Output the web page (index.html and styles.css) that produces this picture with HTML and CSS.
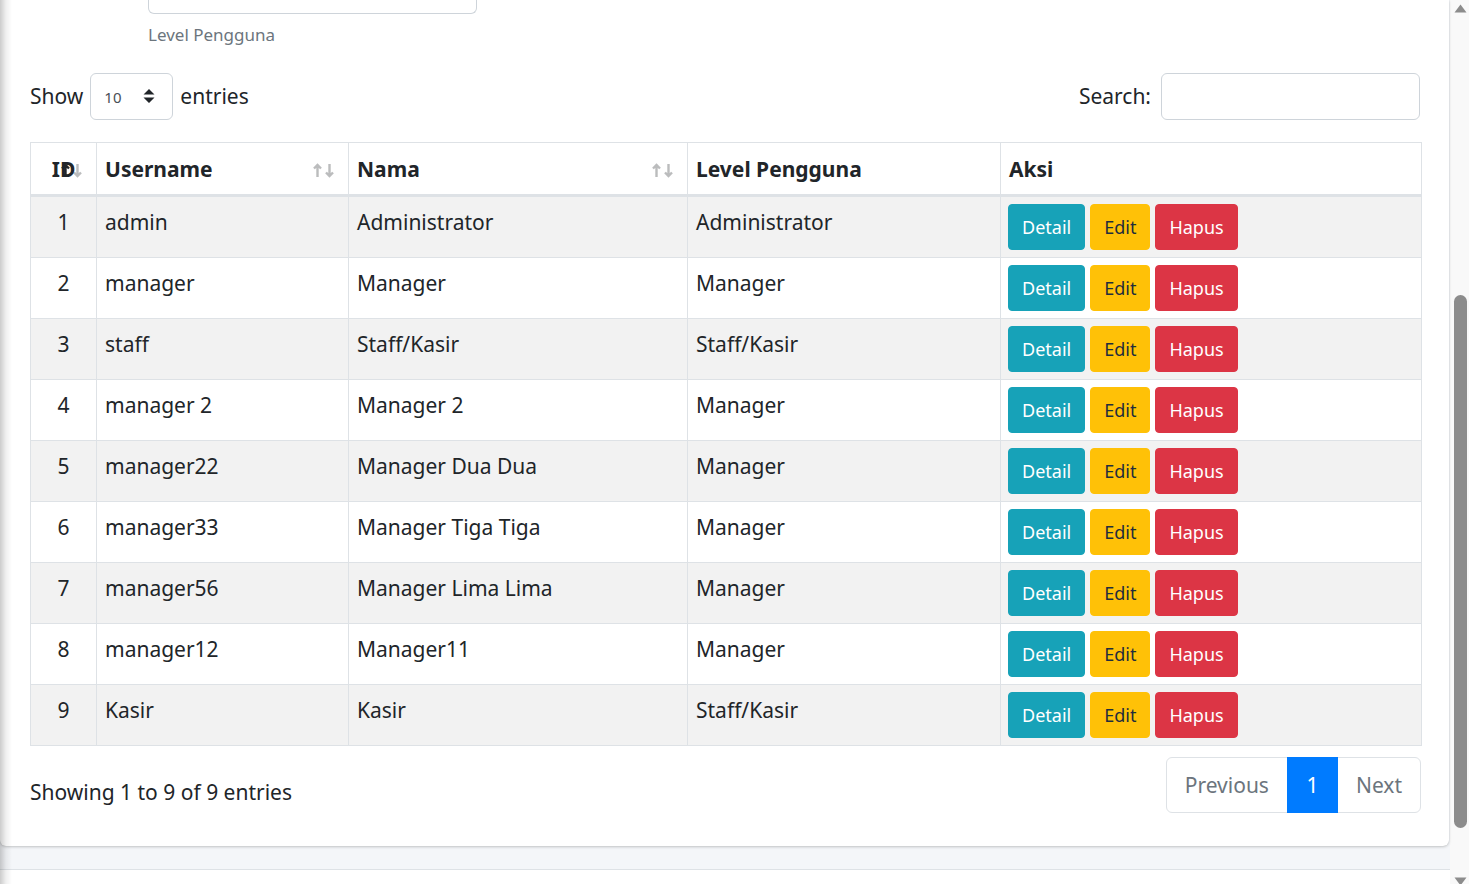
FILE: index.html
```html
<!DOCTYPE html>
<html lang="id">
<head>
<meta charset="utf-8">
<title>Data User</title>
<link rel="stylesheet" href="styles.css">
</head>
<body>
<div class="layout">
  <main class="content">
    <div class="sidebar-shadow"></div>
    <section class="card">
      <div class="filter">
        <div class="filter-input"></div>
        <small class="filter-help">Level Pengguna</small>
      </div>

      <div class="dt-top">
        <label class="dt-length">Show
          <span class="select">10
            <svg class="select-arrow" width="12" height="16" viewBox="0 0 12 16"><path d="M6 1 L11.5 6.5 H0.5 Z M6 15 L11.5 9.5 H0.5 Z" fill="#212529"/></svg>
          </span>
          entries</label>
        <label class="dt-search">Search: <span class="search-input"></span></label>
      </div>

      <table class="table">
        <colgroup>
          <col class="c-id"><col class="c-user"><col class="c-nama"><col class="c-level"><col>
        </colgroup>
        <thead>
          <tr>
            <th class="center sort">ID
              <span class="sort-icons"><svg class="arr on" width="9" height="15" viewBox="0 0 9 15"><path d="M4.5 14V2M1 5.5L4.5 2 8 5.5" fill="none" stroke="currentColor" stroke-width="2.4"/></svg><svg class="arr" width="9" height="15" viewBox="0 0 9 15"><path d="M4.5 1V13M1 9.5L4.5 13 8 9.5" fill="none" stroke="currentColor" stroke-width="2.4"/></svg></span>
            </th>
            <th class="sort">Username
              <span class="sort-icons"><svg class="arr" width="9" height="15" viewBox="0 0 9 15"><path d="M4.5 14V2M1 5.5L4.5 2 8 5.5" fill="none" stroke="currentColor" stroke-width="2.4"/></svg><svg class="arr" width="9" height="15" viewBox="0 0 9 15"><path d="M4.5 1V13M1 9.5L4.5 13 8 9.5" fill="none" stroke="currentColor" stroke-width="2.4"/></svg></span>
            </th>
            <th class="sort">Nama
              <span class="sort-icons"><svg class="arr" width="9" height="15" viewBox="0 0 9 15"><path d="M4.5 14V2M1 5.5L4.5 2 8 5.5" fill="none" stroke="currentColor" stroke-width="2.4"/></svg><svg class="arr" width="9" height="15" viewBox="0 0 9 15"><path d="M4.5 1V13M1 9.5L4.5 13 8 9.5" fill="none" stroke="currentColor" stroke-width="2.4"/></svg></span>
            </th>
            <th>Level Pengguna</th>
            <th>Aksi</th>
          </tr>
        </thead>
        <tbody>
          <tr><td class="center">1</td><td>admin</td><td>Administrator</td><td>Administrator</td><td><div class="actions"><a class="btn info">Detail</a><a class="btn warning">Edit</a><a class="btn danger">Hapus</a></div></td></tr>
          <tr><td class="center">2</td><td>manager</td><td>Manager</td><td>Manager</td><td><div class="actions"><a class="btn info">Detail</a><a class="btn warning">Edit</a><a class="btn danger">Hapus</a></div></td></tr>
          <tr><td class="center">3</td><td>staff</td><td>Staff/Kasir</td><td>Staff/Kasir</td><td><div class="actions"><a class="btn info">Detail</a><a class="btn warning">Edit</a><a class="btn danger">Hapus</a></div></td></tr>
          <tr><td class="center">4</td><td>manager 2</td><td>Manager 2</td><td>Manager</td><td><div class="actions"><a class="btn info">Detail</a><a class="btn warning">Edit</a><a class="btn danger">Hapus</a></div></td></tr>
          <tr><td class="center">5</td><td>manager22</td><td>Manager Dua Dua</td><td>Manager</td><td><div class="actions"><a class="btn info">Detail</a><a class="btn warning">Edit</a><a class="btn danger">Hapus</a></div></td></tr>
          <tr><td class="center">6</td><td>manager33</td><td>Manager Tiga Tiga</td><td>Manager</td><td><div class="actions"><a class="btn info">Detail</a><a class="btn warning">Edit</a><a class="btn danger">Hapus</a></div></td></tr>
          <tr><td class="center">7</td><td>manager56</td><td>Manager Lima Lima</td><td>Manager</td><td><div class="actions"><a class="btn info">Detail</a><a class="btn warning">Edit</a><a class="btn danger">Hapus</a></div></td></tr>
          <tr><td class="center">8</td><td>manager12</td><td>Manager11</td><td>Manager</td><td><div class="actions"><a class="btn info">Detail</a><a class="btn warning">Edit</a><a class="btn danger">Hapus</a></div></td></tr>
          <tr><td class="center">9</td><td>Kasir</td><td>Kasir</td><td>Staff/Kasir</td><td><div class="actions"><a class="btn info">Detail</a><a class="btn warning">Edit</a><a class="btn danger">Hapus</a></div></td></tr>
        </tbody>
      </table>

      <div class="dt-bottom">
        <div class="dt-info">Showing 1 to 9 of 9 entries</div>
        <ul class="pagination">
          <li class="pg-item disabled">Previous</li>
          <li class="pg-item active">1</li>
          <li class="pg-item disabled">Next</li>
        </ul>
      </div>
    </section>
    <footer class="footer"></footer>
  </main>
  <div class="scrollbar">
    <svg class="sb-arrow" width="13" height="9" viewBox="0 0 13 9"><path d="M6.5 0.5 L12.5 8.5 H0.5 Z" fill="#8c8c8c"/></svg>
    <div class="sb-thumb"></div>
    <svg class="sb-arrow sb-down" width="13" height="9" viewBox="0 0 13 9"><path d="M6.5 8.5 L12.5 0.5 H0.5 Z" fill="#8c8c8c"/></svg>
  </div>
</div>
</body>
</html>
```

FILE: styles.css
```css
html, body {
  margin: 0;
  padding: 0;
  height: 884px;
  overflow: hidden;
}

body {
  font-family: "Noto Sans", "Open Sans", sans-serif;
  font-size: 21px;
  color: #212529;
  background: #fff;
}

.layout {
  display: flex;
  height: 884px;
}

.content {
  flex: 1;
  min-width: 0;
  position: relative;
  background: #f4f6f9;
  display: flex;
  flex-direction: column;
}

.sidebar-shadow {
  position: absolute;
  left: 0;
  top: 0;
  bottom: 0;
  width: 12px;
  background: linear-gradient(to right, rgba(0, 0, 0, 0.2), rgba(0, 0, 0, 0.06) 50%, rgba(0, 0, 0, 0));
  pointer-events: none;
  z-index: 2;
}

.card {
  background: #fff;
  width: 1449px;
  box-sizing: border-box;
  padding: 0 29px 33px 30px;
  border-radius: 0 0 6px 6px;
  box-shadow: 0 0 1px rgba(0, 0, 0, 0.125), 0 1px 3px rgba(0, 0, 0, 0.2);
}

/* filter */
.filter {
  padding-left: 118px;
}

.filter-input {
  width: 327px;
  height: 13px;
  border: 1px solid #ced4da;
  border-top: 0;
  border-radius: 0 0 6px 6px;
}

.filter-help {
  display: block;
  margin-top: 7px;
  font-size: 17px;
  line-height: 27px;
  color: #6c757d;
}

/* datatable top */
.dt-top {
  display: flex;
  justify-content: space-between;
  align-items: center;
  margin-top: 25px;
  height: 46px;
}

.dt-length,
.dt-search {
  display: flex;
  align-items: center;
  gap: 7px;
  line-height: 36px;
}

.select {
  flex: none;
  box-sizing: border-box;
  width: 83px;
  height: 47px;
  border: 1px solid #ced4da;
  border-radius: 6px;
  display: flex;
  align-items: center;
  justify-content: space-between;
  padding: 2px 17px 0 13px;
  font-size: 15px;
  color: #495057;
}

.select-arrow {
  display: block;
  margin-top: -2px;
}

.dt-search {
  gap: 10px;
}

.search-input {
  flex: none;
  display: block;
  box-sizing: border-box;
  width: 259px;
  height: 47px;
  border: 1px solid #ced4da;
  border-radius: 6px;
}

/* table */
.table {
  margin-top: 23px;
  width: 1392px;
  border-collapse: collapse;
  table-layout: fixed;
}

.c-id { width: 66px; }
.c-user { width: 252px; }
.c-nama { width: 339px; }
.c-level { width: 313px; }

.table th,
.table td {
  border: 1px solid #dee2e6;
  padding: 7px 8px;
  text-align: left;
  vertical-align: top;
  line-height: 36px;
}

.table th {
  font-weight: 700;
  padding-top: 8px;
  border-bottom: 3px solid #dee2e6;
  position: relative;
  height: 36px;
}

.table td {
  height: 46px;
}

.table .center {
  text-align: center;
}

.table tbody tr:nth-child(odd) {
  background: #f2f2f2;
}

.sort-icons {
  position: absolute;
  right: 14px;
  top: 20px;
  display: flex;
  gap: 3px;
  color: #212529;
}

.arr {
  display: block;
  opacity: 0.3;
}

.arr.on {
  opacity: 1;
}

.actions {
  display: flex;
  gap: 5px;
  margin-left: -1px;
}

.btn {
  display: block;
  box-sizing: border-box;
  height: 46px;
  line-height: 44px;
  padding: 0 13px;
  border: 1px solid transparent;
  border-radius: 4px;
  font-size: 18px;
}

.btn.info {
  background: #17a2b8;
  border-color: #17a2b8;
  color: #fff;
}

.btn.warning {
  background: #ffc107;
  border-color: #ffc107;
  color: #1f2d3d;
}

.btn.danger {
  background: #dc3545;
  border-color: #dc3545;
  color: #fff;
}

/* bottom */
.dt-bottom {
  display: flex;
  justify-content: space-between;
  align-items: flex-start;
  margin-top: 11px;
  width: 1391px;
}

.dt-info {
  padding-top: 17px;
  line-height: 36px;
}

.pagination {
  display: flex;
  margin: 0;
  padding: 0;
  list-style: none;
}

.pg-item {
  box-sizing: border-box;
  height: 56px;
  line-height: 54px;
  padding: 0 18px;
  border: 1px solid #dee2e6;
  margin-left: -1px;
  color: #6c757d;
  background: #fff;
}

.pg-item:first-child {
  border-radius: 6px 0 0 6px;
}

.pg-item:last-child {
  border-radius: 0 6px 6px 0;
}

.pg-item.active {
  background: #007bff;
  border-color: #007bff;
  color: #fff;
  width: 51px;
  text-align: center;
  padding: 0;
  position: relative;
  z-index: 1;
}

.footer {
  margin-top: 23px;
  flex: 1;
  background: #fff;
  border-top: 1px solid #dee2e6;
}

/* fake scrollbar */
.scrollbar {
  width: 19px;
  flex: none;
  background: #f9f9f9;
  box-sizing: border-box;
  padding: 4px 2px 0 4px;
  display: flex;
  flex-direction: column;
}

.sb-arrow {
  display: block;
}

.sb-thumb {
  margin-top: 282px;
  height: 533px;
  border-radius: 7px;
  background: #8c8c8c;
}

.sb-down {
  margin-top: auto;
  margin-bottom: -2px;
}
```
